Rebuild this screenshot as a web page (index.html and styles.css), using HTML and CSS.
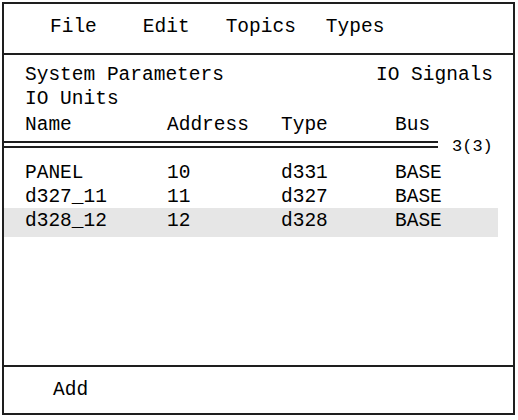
FILE: index.html
```html
<!DOCTYPE html>
<html>
<head>
<meta charset="utf-8">
<link rel="stylesheet" href="styles.css">
</head>
<body>
<div class="frame">
  <div class="menu">
    <span class="m1">File</span>
    <span class="m2">Edit</span>
    <span class="m3">Topics</span>
    <span class="m4">Types</span>
  </div>
  <div class="content">
    <div class="title">
      <span>System Parameters</span>
      <span>IO Signals</span>
    </div>
    <div class="sub">IO Units</div>
    <div class="row head">
      <span class="c1">Name</span>
      <span class="c2">Address</span>
      <span class="c3">Type</span>
      <span class="c4">Bus</span>
    </div>
    <div class="rule">
      <div class="lines"></div>
      <span class="count">3(3)</span>
    </div>
    <div class="list">
      <div class="row">
        <span class="c1">PANEL</span>
        <span class="c2">10</span>
        <span class="c3">d331</span>
        <span class="c4">BASE</span>
      </div>
      <div class="row">
        <span class="c1">d327_11</span>
        <span class="c2">11</span>
        <span class="c3">d327</span>
        <span class="c4">BASE</span>
      </div>
      <div class="row sel">
        <span class="c1">d328_12</span>
        <span class="c2">12</span>
        <span class="c3">d328</span>
        <span class="c4">BASE</span>
      </div>
    </div>
  </div>
  <div class="footer">
    <span class="add">Add</span>
  </div>
</div>
</body>
</html>
```
FILE: styles.css
```css
html, body {
  margin: 0;
  padding: 0;
  background: #fff;
}
body {
  font-family: "Courier New", "Nimbus Mono PS", "FreeMono", Courier, "Liberation Mono", monospace;
  font-size: 19.5px;
  color: #000;
}
.frame {
  margin: 2px 0 0 2px;
  width: 509px;
  height: 409px;
  border: 2px solid #1e1e1e;
  display: flex;
  flex-direction: column;
}
.menu {
  border-bottom: 2px solid #1e1e1e;
  display: flex;
  align-items: center;
  padding-left: 46px;
  padding-bottom: 3px;
  box-sizing: border-box;
  height: 51px;
}
.menu span { white-space: pre; line-height: 22px; }
.m2 { margin-left: 46px; }
.m3 { margin-left: 36px; }
.m4 { margin-left: 30px; }
.content {
  flex: 1;
  padding-top: 8px;
  box-sizing: border-box;
}
.title {
  display: flex;
  justify-content: space-between;
  padding: 0 20px 0 21px;
  line-height: 24px;
}
.sub {
  padding-left: 21px;
  line-height: 24px;
}
.row {
  display: flex;
  line-height: 24px;
  padding-left: 21px;
  white-space: pre;
}
.head { line-height: 29px; }
.c1 { width: 142px; }
.c2 { width: 114px; }
.c3 { width: 114px; }
.c4 { width: 80px; }
.rule {
  display: flex;
  align-items: center;
  margin-top: -3px;
  height: 14px;
}
.lines {
  width: 434px;
  height: 3px;
  border-top: 2px solid #1e1e1e;
  border-bottom: 2px solid #1e1e1e;
}
.count {
  margin-left: 14px;
  font-size: 17px;
  line-height: 14px;
  position: relative;
  top: 3px;
}
.list {
  padding-top: 10px;
}
.list .row { height: 24px; }
.sel {
  background: #e6e6e6;
  margin-right: 15px;
  margin-top: -1px;
  height: 29px !important;
  line-height: 26px;
}
.footer {
  height: 48px;
  border-top: 2px solid #1e1e1e;
  display: flex;
  align-items: center;
  padding-left: 49px;
  box-sizing: border-box;
}
```
